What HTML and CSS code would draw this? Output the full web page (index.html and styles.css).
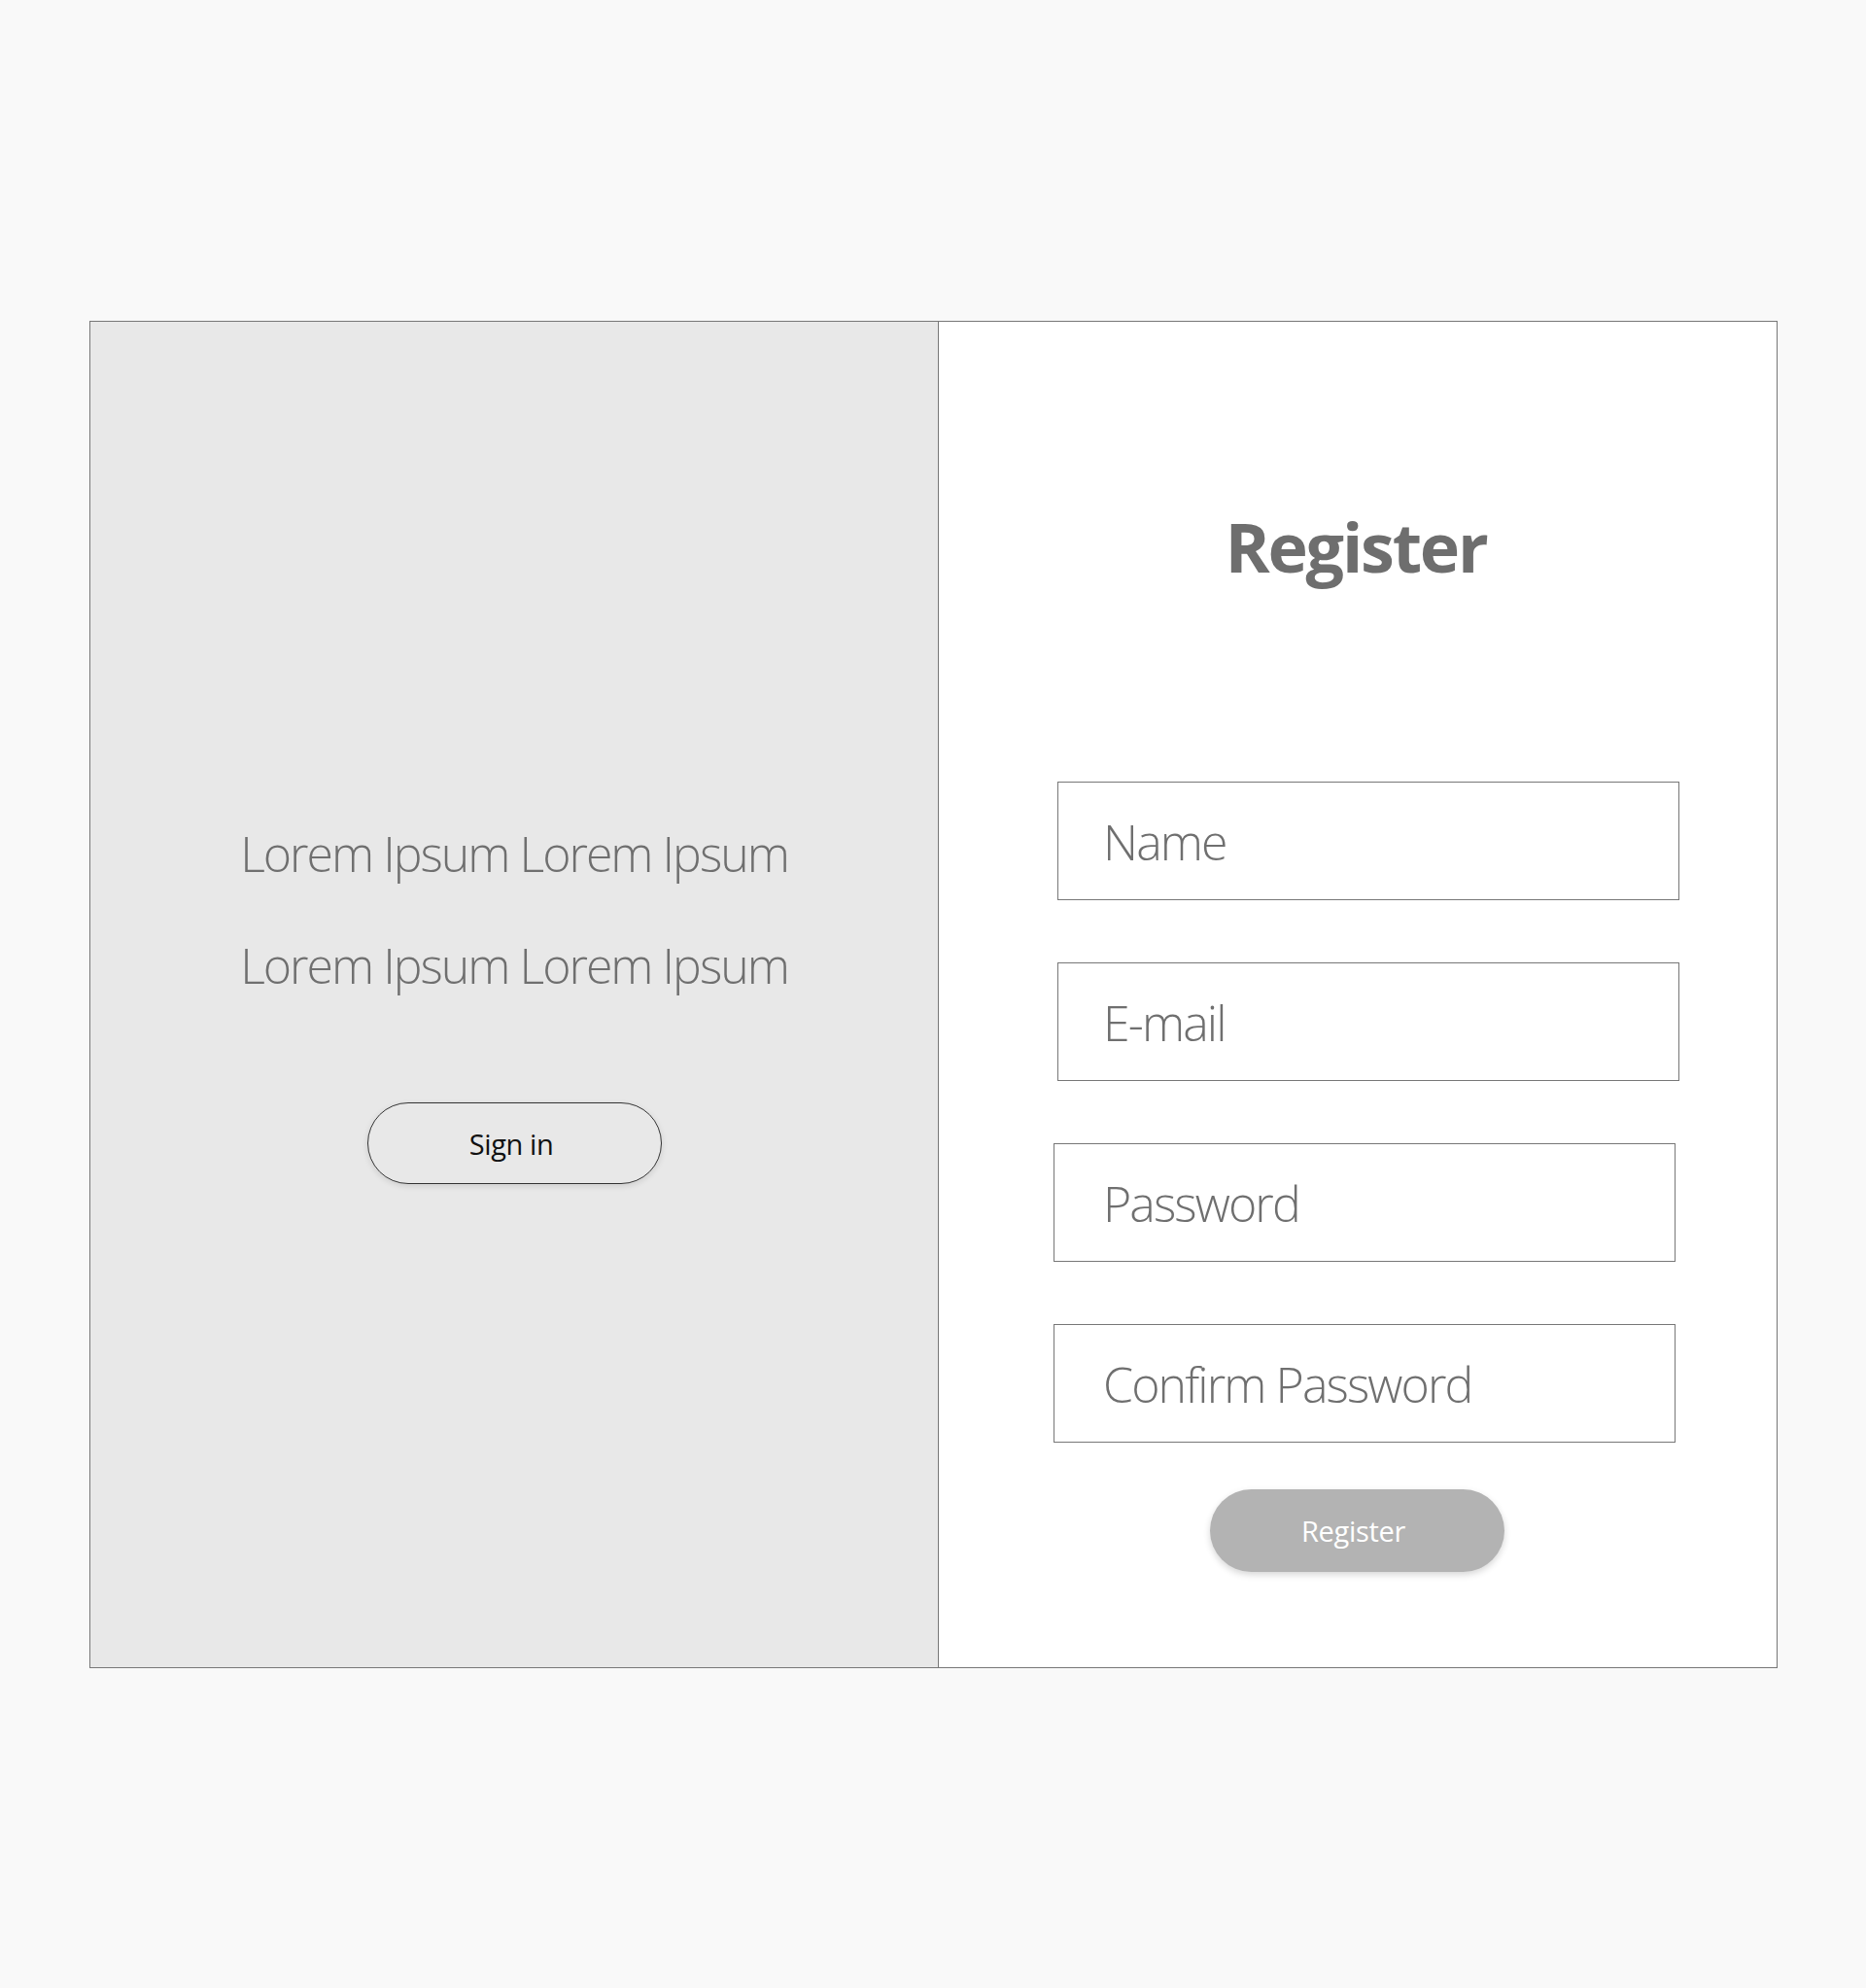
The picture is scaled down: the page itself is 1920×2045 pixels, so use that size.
FILE: index.html
```html
<!DOCTYPE html>
<html lang="en">
<head>
<meta charset="utf-8">
<title>Register</title>
<link rel="stylesheet" href="styles.css">
</head>
<body>
<main class="card">
  <section class="panel-left">
    <p class="tagline">Lorem Ipsum Lorem Ipsum</p>
    <p class="tagline">Lorem Ipsum Lorem Ipsum</p>
    <button class="btn-signin" type="button">Sign in</button>
  </section>
  <section class="panel-right">
    <h1 class="title">Register</h1>
    <form class="form">
      <div class="field">Name</div>
      <div class="field">E-mail</div>
      <div class="field field-shift">Password</div>
      <div class="field field-shift">Confirm Password</div>
      <button class="btn-register" type="button">Register</button>
    </form>
  </section>
</main>
</body>
</html>
```
FILE: styles.css
```css
html, body {
  margin: 0;
  padding: 0;
}

body {
  background: #f9f9f9;
  font-family: "Open Sans", "Noto Sans", "Liberation Sans", sans-serif;
  width: 1920px;
  height: 2045px;
  overflow: hidden;
}

.card {
  margin: 330px 0 0 92px;
  width: 1737px;
  height: 1386px;
  box-sizing: border-box;
  border: 1px solid #777777;
  background: #ffffff;
  display: flex;
}

.panel-left {
  width: 873px;
  box-sizing: border-box;
  flex: none;
  background: #e8e8e8;
  border-right: 1px solid #777777;
  padding-top: 490px;
  display: flex;
  flex-direction: column;
  align-items: center;
}

.tagline {
  margin: 0;
  font-size: 50px;
  font-weight: 300;
  line-height: 115px;
  color: #6f6f6f;
  letter-spacing: -2px;
  white-space: nowrap;
}

.btn-signin {
  margin-top: 83px;
  width: 303px;
  height: 84px;
  border: 1px solid #333333;
  border-radius: 42px;
  background: transparent;
  box-shadow: 0 2px 6px rgba(0, 0, 0, 0.12);
  font-family: "Open Sans", "Noto Sans", sans-serif;
  font-size: 29px;
  font-weight: 400;
  color: #111111;
  letter-spacing: -0.4px;
  padding: 0 6px 0 0;
  cursor: pointer;
}

.panel-right {
  flex: 1;
  display: flex;
  flex-direction: column;
  padding-top: 196px;
}

.title {
  margin: 0;
  text-align: center;
  font-size: 70px;
  font-weight: 700;
  line-height: 70px;
  color: #6e6e6e;
  letter-spacing: -2.2px;
  padding-right: 4px;
}

.form {
  margin: 207px 0 0 122px;
  display: flex;
  flex-direction: column;
  gap: 64px;
}

.field {
  width: 640px;
  height: 122px;
  box-sizing: border-box;
  border: 1px solid #777777;
  background: #ffffff;
  padding: 3px 0 0 46px;
  font-size: 50px;
  font-weight: 300;
  line-height: 117px;
  color: #6f6f6f;
  letter-spacing: -1.9px;
  white-space: nowrap;
}

.field-shift {
  margin-left: -4px;
  padding-left: 50px;
  width: 640px;
}

.btn-register {
  align-self: flex-start;
  margin: -16px 0 0 157px;
  width: 303px;
  height: 85px;
  border: none;
  border-radius: 43px;
  background: #b3b3b3;
  box-shadow: 0 3px 7px rgba(0, 0, 0, 0.16);
  font-family: "Open Sans", "Noto Sans", sans-serif;
  font-size: 29px;
  font-weight: 400;
  color: #ffffff;
  letter-spacing: -0.3px;
  padding: 0 8px 0 0;
  cursor: pointer;
}
```
